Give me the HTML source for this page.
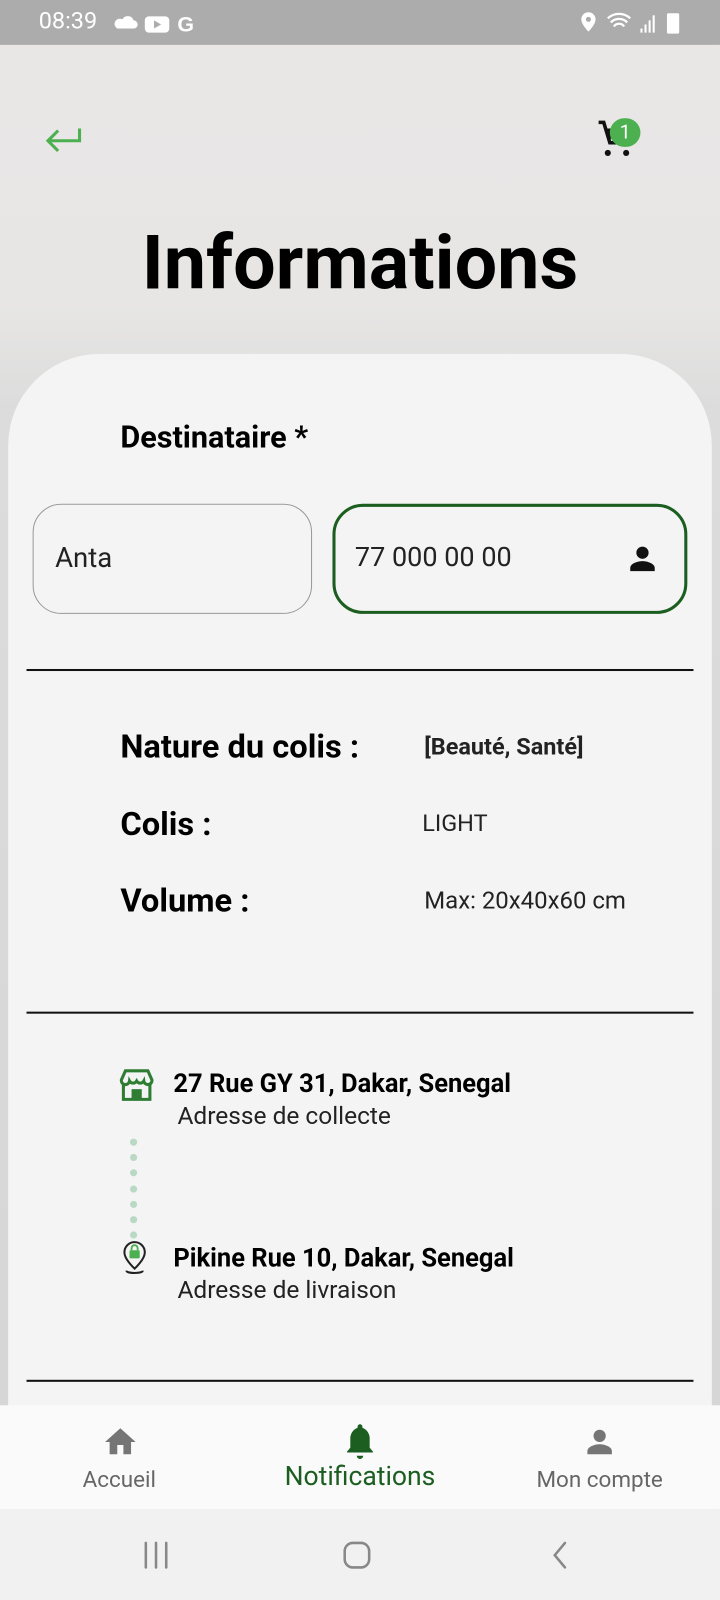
<!DOCTYPE html>
<html><head><meta charset="utf-8"><style>
html,body{margin:0;padding:0;width:720px;height:1600px;overflow:hidden;background:#e8e7e6}
#w{position:absolute;left:0;top:0;width:706px;height:1569px;transform:scale(1.0198);transform-origin:0 0;font-family:"Roboto","Liberation Sans",sans-serif;background:linear-gradient(#e8e7e6 0,#e7e6e5 300px,#dcdcdc 400px,#d6d6d6 1400px)}
.a{position:absolute;white-space:nowrap}
.b{font-weight:bold}
</style></head><body><div id="w">
<div class="a" style="left:0;top:0;width:706px;height:44px;background:#adacad"></div>
<div class="a" style="left:38px;top:7px;font-size:23px;color:#fff">08:39</div>
<svg class="a" style="left:112px;top:12px" width="84" height="22" viewBox="0 0 84 22"><path d="M3 16h16a4 4 0 0 0 0-8 6 6 0 0 0-11-1 4.5 4.5 0 0 0-5 9z" fill="#fff"/><rect x="30" y="4" width="24" height="16" rx="4" fill="#fff"/><path d="M39 8l7 4-7 4z" fill="#adacad"/><text x="62" y="19" font-size="21" font-weight="bold" fill="#fff" font-family="Liberation Sans">G</text></svg>
<svg class="a" style="left:566px;top:10px" width="106" height="24" viewBox="0 0 106 24"><path d="M11 2a7 7 0 0 0-7 7c0 5 7 12 7 12s7-7 7-12a7 7 0 0 0-7-7z" fill="#fff"/><circle cx="11" cy="9" r="2.5" fill="#adacad"/><path d="M30 8a16 16 0 0 1 22 0M33 12a11 11 0 0 1 16 0M36 16a6 6 0 0 1 10 0" stroke="#fff" stroke-width="2.2" fill="none"/><rect x="62" y="18" width="2" height="4" fill="#fff"/><rect x="66" y="14" width="2" height="8" fill="#fff"/><rect x="70" y="10" width="2" height="12" fill="#fff"/><rect x="74" y="5" width="2" height="17" fill="#fff"/><rect x="88" y="3" width="12" height="20" rx="1.5" fill="#fff"/></svg>
<svg class="a" style="left:42px;top:122px" width="40" height="30" viewBox="0 0 40 30"><path d="M36 4v12H6M15 6L5 16l10 10" stroke="#4caf50" stroke-width="3" fill="none"/></svg>
<svg class="a" style="left:584px;top:116px" width="40" height="40" viewBox="0 0 40 40"><path d="M3 4h5l6 20h16" stroke="#111" stroke-width="3.5" fill="none"/><path d="M10 10h20l-4 10H13z" fill="#111"/><circle cx="12" cy="34" r="3" fill="#111"/><circle cx="30" cy="34" r="3" fill="#111"/></svg>
<div class="a" style="left:598px;top:116px;width:30px;height:28px;border-radius:14px;background:#4caf50;color:#fff;font-size:19px;text-align:center;line-height:28px">1</div>
<div class="a b" style="left:0;width:706px;text-align:center;top:215px;font-size:74px;color:#000">Informations</div>
<div class="a" style="left:8px;top:347px;width:690px;height:1100px;background:#f4f4f4;border-radius:90px 90px 0 0"></div>
<div class="a b" style="left:118px;top:412px;font-size:30px">Destinataire *</div>
<div class="a" style="left:32px;top:494px;border:1.5px solid #999;border-radius:28px;box-sizing:border-box;height:108px;width:274px"></div>
<div class="a" style="left:54px;top:531px;font-size:27px;color:#222">Anta</div>
<div class="a" style="left:326px;top:494px;width:348px;height:108px;border:3px solid #1b5e20;border-radius:30px;box-sizing:border-box"></div>
<div class="a" style="left:348px;top:531px;font-size:26.5px;color:#222">77 000 00 00</div>
<svg class="a" style="left:612px;top:530px" width="36" height="36" viewBox="0 0 24 24"><circle cx="12" cy="8" r="4" fill="#111"/><path d="M4 20v-2c0-3 5-4.5 8-4.5s8 1.5 8 4.5v2z" fill="#111"/></svg>
<div class="a" style="left:26px;top:656px;width:654px;height:2px;background:#111"></div>
<div class="a b" style="left:118px;top:713px;font-size:32px">Nature du colis :</div>
<div class="a b" style="left:416px;top:719px;font-size:23px;color:#222">[Beauté, Santé]</div>
<div class="a b" style="left:118px;top:789px;font-size:32px">Colis :</div>
<div class="a" style="left:414px;top:794px;font-size:23px;color:#222">LIGHT</div>
<div class="a b" style="left:118px;top:864px;font-size:32px">Volume :</div>
<div class="a" style="left:416px;top:869px;font-size:23.5px;color:#222">Max: 20x40x60 cm</div>
<div class="a" style="left:26px;top:992px;width:654px;height:2px;background:#111"></div>
<svg class="a" style="left:117px;top:1047px" width="34" height="34" viewBox="0 0 34 34"><path d="M6 3h22l4 9a4 4 0 0 1-8 1 4 4 0 0 1-7 0 4 4 0 0 1-7 0 4 4 0 0 1-8-1z" fill="none" stroke="#2e7d32" stroke-width="3"/><path d="M4 15v16h26V15" fill="none" stroke="#2e7d32" stroke-width="3"/><rect x="12" y="21" width="10" height="10" fill="#2e7d32"/></svg>
<div class="a b" style="left:170px;top:1049px;font-size:25px">27 Rue GY 31, Dakar, Senegal</div>
<div class="a" style="left:174px;top:1080px;font-size:24px;color:#222">Adresse de collecte</div>
<svg class="a" style="left:126px;top:1114px" width="10" height="104" viewBox="0 0 10 104"><g fill="#b9d9c5"><circle cx="5" cy="6" r="3.5"/><circle cx="5" cy="21" r="3.5"/><circle cx="5" cy="36" r="3.5"/><circle cx="5" cy="52" r="3.5"/><circle cx="5" cy="67" r="3.5"/><circle cx="5" cy="82" r="3.5"/><circle cx="5" cy="97" r="3.5"/></g></svg>
<svg class="a" style="left:120px;top:1216px" width="24" height="38" viewBox="0 0 24 38"><path d="M12 2a10 10 0 0 0-10 10c0 7 10 16 10 16s10-9 10-16A10 10 0 0 0 12 2z" fill="none" stroke="#222" stroke-width="2"/><rect x="7" y="10" width="10" height="8" rx="1" fill="#4caf50"/><path d="M9 10V8a3 3 0 0 1 6 0v2" stroke="#4caf50" stroke-width="1.8" fill="none"/><path d="M4 30c0 3 16 3 16 0" stroke="#222" stroke-width="2" fill="none"/></svg>
<div class="a b" style="left:170px;top:1220px;font-size:25px">Pikine Rue 10, Dakar, Senegal</div>
<div class="a" style="left:174px;top:1251px;font-size:24px;color:#222">Adresse de livraison</div>
<div class="a" style="left:26px;top:1353px;width:654px;height:2px;background:#111"></div>
<div class="a" style="left:0;top:1378px;width:706px;height:102px;background:#fafafa"></div>
<svg class="a" style="left:100px;top:1396px" width="36" height="36" viewBox="0 0 24 24"><path d="M10 20v-6h4v6h5v-8h3L12 3 2 12h3v8z" fill="#757575"/></svg>
<div class="a" style="left:57px;width:120px;text-align:center;top:1439px;font-size:22px;color:#666">Accueil</div>
<svg class="a" style="left:334px;top:1394px" width="38" height="40" viewBox="0 0 24 25"><path d="M12 1.5a1.5 1.5 0 0 1 1.5 1.5v.7A7 7 0 0 1 18 10v6l2 2.5v.5H4v-.5L6 16v-6a7 7 0 0 1 4.5-6.3V3A1.5 1.5 0 0 1 12 1.5z" fill="#1b5e20"/><path d="M10 21h4a2 2 0 0 1-4 0z" fill="#1b5e20"/></svg>
<div class="a" style="left:253px;width:200px;text-align:center;top:1433px;font-size:26px;color:#1b5e20">Notifications</div>
<svg class="a" style="left:570px;top:1396px" width="36" height="36" viewBox="0 0 24 24"><circle cx="12" cy="8" r="4" fill="#757575"/><path d="M4 20v-2c0-3 5-4.5 8-4.5s8 1.5 8 4.5v2z" fill="#757575"/></svg>
<div class="a" style="left:498px;width:180px;text-align:center;top:1439px;font-size:22px;color:#666">Mon compte</div>
<div class="a" style="left:0;top:1480px;width:706px;height:89px;background:#f1f1f1"></div>
<svg class="a" style="left:130px;top:1505px" width="440" height="40" viewBox="0 0 440 40"><g stroke="#888" stroke-width="2.5" fill="none" stroke-linecap="round"><path d="M13 8v24M23 8v24M33 8v24"/><rect x="208" y="8" width="24" height="24" rx="8"/><path d="M424 8l-10 12 10 12"/></g></svg>
</div></body></html>
